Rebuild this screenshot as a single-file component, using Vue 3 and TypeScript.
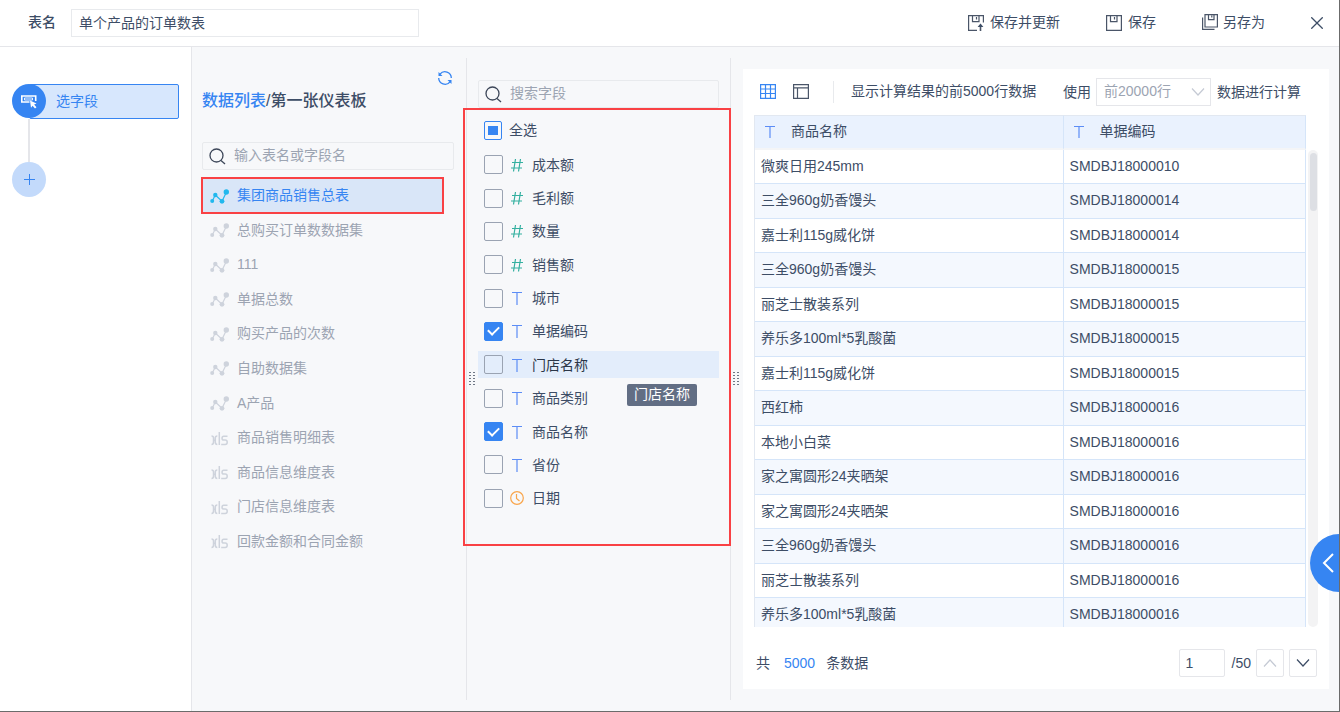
<script setup lang="ts">
import { ref } from 'vue'

interface SourceTable {
  name: string
  kind: 'set' | 'xls'
}
interface Field {
  name: string
  kind: 'number' | 'text' | 'date'
  checked: boolean
}

const tableName = ref('单个产品的订单数表')
const tableQuery = ref('')
const fieldQuery = ref('')
const limit = ref('前20000行')
const page = ref('1')
const activeTable = ref('集团商品销售总表')
const hovered = '门店名称'

const tables: SourceTable[] = [
  { name: '集团商品销售总表', kind: 'set' },
  { name: '总购买订单数数据集', kind: 'set' },
  { name: '111', kind: 'set' },
  { name: '单据总数', kind: 'set' },
  { name: '购买产品的次数', kind: 'set' },
  { name: '自助数据集', kind: 'set' },
  { name: 'A产品', kind: 'set' },
  { name: '商品销售明细表', kind: 'xls' },
  { name: '商品信息维度表', kind: 'xls' },
  { name: '门店信息维度表', kind: 'xls' },
  { name: '回款金额和合同金额', kind: 'xls' },
]

const fields = ref<Field[]>([
  { name: '成本额', kind: 'number', checked: false },
  { name: '毛利额', kind: 'number', checked: false },
  { name: '数量', kind: 'number', checked: false },
  { name: '销售额', kind: 'number', checked: false },
  { name: '城市', kind: 'text', checked: false },
  { name: '单据编码', kind: 'text', checked: true },
  { name: '门店名称', kind: 'text', checked: false },
  { name: '商品类别', kind: 'text', checked: false },
  { name: '商品名称', kind: 'text', checked: true },
  { name: '省份', kind: 'text', checked: false },
  { name: '日期', kind: 'date', checked: false },
])

const rows: [string, string][] = [
  ['微爽日用245mm', 'SMDBJ18000010'],
  ['三全960g奶香馒头', 'SMDBJ18000014'],
  ['嘉士利115g威化饼', 'SMDBJ18000014'],
  ['三全960g奶香馒头', 'SMDBJ18000015'],
  ['丽芝士散装系列', 'SMDBJ18000015'],
  ['养乐多100ml*5乳酸菌', 'SMDBJ18000015'],
  ['嘉士利115g威化饼', 'SMDBJ18000015'],
  ['西红柿', 'SMDBJ18000016'],
  ['本地小白菜', 'SMDBJ18000016'],
  ['家之寓圆形24夹晒架', 'SMDBJ18000016'],
  ['家之寓圆形24夹晒架', 'SMDBJ18000016'],
  ['三全960g奶香馒头', 'SMDBJ18000016'],
  ['丽芝士散装系列', 'SMDBJ18000016'],
  ['养乐多100ml*5乳酸菌', 'SMDBJ18000016'],
]
</script>

<template>
  <div class="page">
    <header class="top">
      <label class="top-label" for="table-name">表名</label>
      <input id="table-name" v-model="tableName" class="name-input" type="text" />
      <div class="actions">
        <button class="action" type="button">
          <svg width="16" height="16" viewBox="0 0 16 16" fill="none" stroke="#4a5568" stroke-width="1.200">
            <path d="M9 15.400H.6V.6h14.800v7M4.500 .6v6h6.500v-6M8.500 2v2.500" />
            <path d="M12.500 16v-5" stroke-width="1.600" />
            <path d="M9.600 12l2.900-3.600 2.900 3.600z" fill="#3d4d66" stroke="none" />
          </svg>
          <span>保存并更新</span>
        </button>
        <button class="action" type="button">
          <svg width="16" height="16" viewBox="0 0 16 16" fill="none" stroke="#4a5568" stroke-width="1.200">
            <path d="M.6.6h14.800v14.800H.6zM4.500 .6v6h6.500v-6M8.500 2v2.500" />
          </svg>
          <span>保存</span>
        </button>
        <button class="action tight" type="button">
          <svg class="raised" width="16" height="16" viewBox="0 0 16 16" fill="none" stroke="#4a5568" stroke-width="1.200">
            <path d="M3 .6h12.400v12.400H3zM6.500 .6v5h5.500v-5M9.800 1.500v2M.6 3.500v11.900H12.500" />
          </svg>
          <span>另存为</span>
        </button>
        <button class="action" type="button" aria-label="关闭">
          <svg width="12" height="12" viewBox="0 0 12 12" fill="none" stroke="#3d4d66" stroke-width="1.300">
            <path d="M.3.3l11.400 11.400M11.700 .3L.3 11.700" />
          </svg>
        </button>
      </div>
    </header>

    <main class="main">
      <aside class="steps">
        <button class="step" type="button">
          <span class="step-dot">
            <svg width="18" height="18" viewBox="0 0 18 18">
              <path d="M15.700 9V4H1.800v6H9.500" fill="none" stroke="#fff" stroke-width="1.600" />
              <path d="M4.500 6h8v2h-8z" fill="none" stroke="#fff" stroke-width=".9" />
              <path d="M10 8.500l6.500 3-2.400 1 2.400 2.700-1.500 1.400-2.400-2.800-1.600 2z" fill="#fff" />
            </svg>
          </span>
          <span class="step-name">选字段</span>
        </button>
        <span class="step-line"></span>
        <button class="add" type="button" aria-label="添加步骤">
          <svg width="12" height="12" viewBox="0 0 12 12" stroke="#3685f2">
            <path d="M6.500 0v11M1 5.500h11" />
          </svg>
        </button>
      </aside>

      <section class="sources">
        <div class="refresh-row">
          <button class="refresh" type="button" aria-label="刷新">
            <svg width="16" height="16" viewBox="0 0 16 16" fill="none" stroke="#3685f2" stroke-width="1.300">
              <path d="M3 4.200A6.300 6.300 0 0 1 14.300 8M13 11.800A6.300 6.300 0 0 1 1.700 8" />
              <path d="M1.500 2v4h4zM14.500 14v-4h-4z" fill="#3685f2" stroke="none" />
            </svg>
          </button>
        </div>
        <h1 class="title"><a href="#">数据列表</a>/第一张仪表板</h1>
        <div class="search">
          <svg width="17" height="17" viewBox="0 0 17 17" fill="none" stroke="#3d4759" stroke-width="1.300">
            <circle cx="7.500" cy="7.500" r="6.500" />
            <path d="M12 12.500l4 3.500" />
          </svg>
          <input v-model="tableQuery" type="text" placeholder="输入表名或字段名" aria-label="输入表名或字段名" />
        </div>
        <ul class="source-list">
          <li v-for="t in tables" :key="t.name">
            <button
              type="button"
              class="source"
              :class="{ active: t.name === activeTable }"
              @click="activeTable = t.name"
            >
              <svg v-if="t.kind === 'set'" width="19" height="15" viewBox="0 0 19 15">
                <path d="M2.300 12L5.300 6 12 12.300 16.500 3" fill="none" stroke="currentColor" stroke-width="1.200" />
                <g fill="currentColor">
                  <circle cx="2.200" cy="12" r="2" />
                  <circle cx="5.300" cy="6" r="2.200" />
                  <circle cx="12" cy="12.300" r="2.400" />
                  <circle cx="16.300" cy="3" r="2.700" />
                </g>
              </svg>
              <svg v-else width="19" height="15" viewBox="0 0 19 15" fill="none" stroke="currentColor" stroke-width="1.500">
                <path d="M1.500 5c1.700 0 2 .6 2 2v4c0 1.700-.5 2.500-2 2.500M7.300 5c-1.700 0-2 .6-2 2v4c0 1.700.5 2.500 2 2.500M3.500 9.200h2M9.300 1v13M17.500 5.300h-3.800c-2.200 0-2.200 3.800 0 3.800h1.500c2.700 0 2.700 4.300 0 4.300h-4" />
              </svg>
              <span>{{ t.name }}</span>
            </button>
          </li>
        </ul>
        <span class="grip"><i v-for="n in 10" :key="n"></i></span>
      </section>

      <section class="fields">
        <div class="search">
          <svg width="17" height="17" viewBox="0 0 17 17" fill="none" stroke="#3d4759" stroke-width="1.300">
            <circle cx="7.500" cy="7.500" r="6.500" />
            <path d="M12 12.500l4 3.500" />
          </svg>
          <input v-model="fieldQuery" type="text" placeholder="搜索字段" aria-label="搜索字段" />
        </div>
        <label class="all"><input type="checkbox" class="box partial" :indeterminate="true" />全选</label>
        <ul class="field-list">
          <li v-for="f in fields" :key="f.name">
            <label class="field" :class="{ hover: f.name === hovered }">
              <input v-model="f.checked" type="checkbox" class="box" />
              <svg v-if="f.kind === 'number'" width="14" height="14" viewBox="0 0 14 14" fill="none" stroke="#34b0a0" stroke-width="1.200">
                <path d="M5.500 1L3.500 13.500M10.500 1L8.500 13.500M2 4.500h11M1 10h11" />
              </svg>
              <svg v-else-if="f.kind === 'text'" width="14" height="14" viewBox="0 0 14 14" fill="none" stroke="#5c8df6" stroke-width="1.200">
                <path d="M2 1.500h10M7 1.500V14" />
              </svg>
              <svg v-else width="14" height="14" viewBox="0 0 14 14" fill="none" stroke="#f9a54b" stroke-width="1.200">
                <circle cx="7" cy="7" r="6.300" />
                <path d="M6.500 3v4.500l3 2.500" />
              </svg>
              <span>{{ f.name }}</span>
              <span v-if="f.name === hovered" class="tip" role="tooltip">{{ f.name }}</span>
            </label>
          </li>
        </ul>
        <span class="frame"></span>
        <span class="grip"><i v-for="n in 10" :key="n"></i></span>
      </section>

      <section class="preview">
        <div class="toolbar">
          <button class="icon-btn" type="button" aria-label="明细视图">
            <svg width="16" height="16" viewBox="0 0 16 16" fill="none" stroke="#3685f2" stroke-width="1.200">
              <path d="M.6.6h14.800v13.800H.6zM5.500 .6v13.800M10.500 .6v13.800M.6 5h14.800M.6 9.500h14.800" />
            </svg>
          </button>
          <button class="icon-btn" type="button" aria-label="结构视图">
            <svg width="16" height="16" viewBox="0 0 16 16" fill="none" stroke="#4a5568" stroke-width="1.200">
              <path d="M.6.6h14.800v13.800H.6zM.6 3.800h14.800M4.500 3.800v10.600" />
            </svg>
          </button>
          <span class="rule"></span>
          <span class="summary">显示计算结果的前5000行数据</span>
          <label for="limit">使用</label>
          <span class="select">
            <select id="limit" v-model="limit">
              <option>前20000行</option>
            </select>
            <svg width="14" height="8" viewBox="0 0 14 8" fill="none" stroke="#c5cad4" stroke-width="1.200">
              <path d="M1 .5l6 6.500 6-6.500" />
            </svg>
          </span>
          <span>数据进行计算</span>
        </div>

        <div class="grid">
          <div class="table-clip">
            <table>
              <thead>
                <tr>
                  <th v-for="h in ['商品名称', '单据编码']" :key="h">
                    <span class="th">
                      <svg width="14" height="14" viewBox="0 0 14 14" fill="none" stroke="#5c8df6" stroke-width="1.200">
                        <path d="M2 2.500h10M7 2.500V14" />
                      </svg>
                      {{ h }}
                    </span>
                  </th>
                </tr>
              </thead>
              <tbody>
                <tr v-for="(r, i) in rows" :key="i">
                  <td>{{ r[0] }}</td>
                  <td>{{ r[1] }}</td>
                </tr>
              </tbody>
            </table>
          </div>
          <div class="track"><span class="thumb"></span></div>
        </div>

        <footer class="foot">
          <span>共</span><b>5000</b><span>条数据</span>
          <input v-model="page" class="page-input" type="text" aria-label="页码" />
          <span class="pages">/50</span>
          <button class="pager" type="button" aria-label="上一页" disabled>
            <svg width="14" height="8" viewBox="0 0 14 8" fill="none" stroke="#c5cad4" stroke-width="1.200">
              <path d="M1 7.500L7 1l6 6.500" />
            </svg>
          </button>
          <button class="pager" type="button" aria-label="下一页">
            <svg width="14" height="8" viewBox="0 0 14 8" fill="none" stroke="#3d4d66" stroke-width="1.200">
              <path d="M1 .5L7 7l6-6.500" />
            </svg>
          </button>
        </footer>
      </section>
    </main>

    <button class="drawer" type="button" aria-label="展开">
      <svg width="12" height="20" viewBox="0 0 12 20" fill="none" stroke="#fff" stroke-width="2">
        <path d="M11 1L2 10l9 9" />
      </svg>
    </button>
  </div>
</template>

<style>
body {
  margin: 0;
}
</style>

<style scoped>
.page {
  position: relative;
  box-sizing: border-box;
  display: flex;
  flex-direction: column;
  min-height: 100vh;
  border-right: 1px solid #6b6b6b;
  border-bottom: 1px solid #6b6b6b;
  background: #f7f8fa;
  color: #3d4d66;
  font: 14px/20px 'Liberation Sans', 'Noto Sans CJK SC', sans-serif;
  overflow: hidden;
}
.page *,
.page *::before {
  box-sizing: border-box;
}
button,
input,
select {
  font: inherit;
  color: inherit;
}
button {
  padding: 0;
  border: 0;
  background: none;
  cursor: pointer;
}
svg {
  display: block;
  flex: none;
}
ul {
  margin: 0;
  padding: 0;
  list-style: none;
}
.top {
  display: flex;
  align-items: center;
  height: 47px;
  padding: 0 16px 0 28px;
  border-bottom: 1px solid #e5e6ea;
  background: #fff;
}
.top-label {
  width: 43px;
  padding-bottom: 2px;
  font-weight: 500;
}
.name-input {
  width: 348px;
  height: 28px;
  padding: 0 7px 2px;
  border: 1px solid #e8eaed;
  outline: 0;
  background: #fff;
}
.actions {
  display: flex;
  align-items: center;
  gap: 46px;
  margin-left: auto;
}
.action {
  display: flex;
  align-items: center;
  gap: 6px;
}
.action span {
  padding-bottom: 2px;
}
.raised {
  margin-bottom: 2px;
}
.tight {
  gap: 5px;
}
.main {
  display: flex;
  flex: 1;
}
.steps {
  display: flex;
  flex: none;
  flex-direction: column;
  width: 192px;
  padding: 37px 12px 0;
  border-right: 1px solid #e5e6ea;
  background: #fff;
}
.step {
  display: flex;
  color: #3685f2;
  text-align: left;
}
.step-dot {
  z-index: 1;
  display: grid;
  flex: none;
  place-items: center;
  width: 34px;
  height: 34px;
  border-radius: 50%;
  background: #3685f2;
}
.step-name {
  flex: 1;
  height: 35px;
  margin-left: -17px;
  padding-left: 26px;
  border: 1px solid #3685f2;
  border-radius: 2px;
  background: #d7e7fd;
  line-height: 33px;
}
.step-line {
  width: 2px;
  height: 43px;
  margin-left: 16px;
  background: #e5e6ea;
}
.add {
  display: grid;
  place-items: center;
  width: 34px;
  height: 35px;
  border-radius: 50%;
  background: #c3dafb;
}
.sources,
.fields {
  position: relative;
  flex: none;
  margin: 11px 0;
  border-right: 1px solid #e5e6ea;
}
.sources {
  width: 275px;
  padding: 12px 12px 0 10px;
}
.refresh-row {
  display: flex;
  justify-content: flex-end;
  padding-right: 1px;
}
.title {
  margin: 3px 0 29px;
  font-size: 16px;
  font-weight: 500;
  line-height: 24px;
}
.title a {
  color: #3685f2;
  text-decoration: none;
}
.search {
  display: flex;
  align-items: center;
  gap: 8px;
  height: 28px;
  padding: 0 6px;
  border: 1px solid #e8eaed;
  border-radius: 2px;
}
.search input {
  flex: 1;
  min-width: 0;
  padding: 0 0 2px;
  border: 0;
  outline: 0;
  background: none;
}
.search input::placeholder {
  color: #9ca4b2;
  opacity: 1;
}
.source-list {
  display: grid;
  grid-auto-rows: 1fr;
  height: 380px;
  margin: 8px 11px 0 0;
}
.source-list li {
  display: flex;
}
.source {
  display: flex;
  flex: 1;
  align-items: center;
  gap: 8px;
  padding: 0 8px;
  color: #9ca4b2;
}
.source svg {
  margin-top: 2px;
  color: #ced3dc;
}
.source.active {
  outline: 2px solid #f94144;
  outline-offset: -1px;
  background: #d9e6f8;
  color: #3685f2;
}
.source.active svg {
  color: #22b8ee;
}
.grip {
  position: absolute;
  top: 50%;
  right: -9px;
  display: grid;
  grid-template-columns: 2px 2px;
  gap: 2px;
  margin-top: -7px;
}
.grip i {
  width: 2px;
  height: 1px;
  background: #6f7785;
}
.fields {
  width: 264px;
  padding: 22px 11px 0;
}
.all {
  display: flex;
  align-items: center;
  gap: 7px;
  height: 20px;
  margin: 12px 0 8px 6px;
}
.box {
  display: grid;
  flex: none;
  place-items: center;
  width: 19px;
  height: 19px;
  margin: 0;
  border: 1px solid #9aa3b2;
  border-radius: 2px;
  appearance: none;
}
.box:checked {
  border-color: #3685f2;
  background: #3685f2;
}
.box:checked::before {
  width: 7px;
  height: 11px;
  margin-top: -3px;
  border: solid #fff;
  border-width: 0 2px 2px 0;
  content: '';
  transform: rotate(45deg);
}
.partial {
  width: 18px;
  border-color: #3685f2;
}
.partial::before {
  width: 10px;
  height: 9px;
  background: #3685f2;
  content: '';
}
.field-list {
  display: grid;
  grid-auto-rows: 1fr;
  height: 367px;
}
.field-list li {
  display: grid;
  align-items: center;
}
.field {
  position: relative;
  display: flex;
  align-items: center;
  gap: 8px;
  height: 27px;
  padding-left: 6px;
}
.field.hover {
  background: #e3edfb;
  color: #2b3648;
}
.box + svg {
  margin-left: -1px;
}
.tip {
  position: absolute;
  top: 33px;
  left: 149px;
  z-index: 2;
  padding: 0 7px 2px;
  border-radius: 2px;
  background: #626e84;
  color: #fff;
  line-height: 20px;
}
.frame {
  position: absolute;
  top: 50px;
  right: -1px;
  left: -4px;
  height: 438px;
  border: 2px solid #f94144;
  pointer-events: none;
}
.preview {
  display: flex;
  flex: 1;
  flex-direction: column;
  min-width: 0;
  margin: 22px 10px 22px 12px;
  padding: 0 11px;
  background: #fff;
}
.toolbar {
  display: flex;
  align-items: center;
  height: 46px;
  padding-left: 6px;
  white-space: nowrap;
}
.icon-btn {
  margin-right: 17px;
}
.rule {
  width: 1px;
  height: 22px;
  margin: 0 17px 0 7px;
  background: #e8eaed;
}
.summary {
  margin-right: auto;
  padding-bottom: 2px;
}
.select {
  position: relative;
  margin: 0 6px 0 5px;
}
.toolbar > :last-child {
  margin-right: 17px;
}
.select select {
  display: block;
  width: 115px;
  height: 28px;
  padding: 0 7px 2px;
  border: 1px solid #e5e6ea;
  outline: 0;
  background: #fff;
  color: #9ca4b2;
  appearance: none;
}
.select svg {
  position: absolute;
  top: 10px;
  right: 6px;
  pointer-events: none;
}
.grid {
  display: flex;
  gap: 2px;
  height: 512px;
}
.table-clip {
  flex: 1;
  overflow: hidden;
}
table {
  width: 100%;
  border-spacing: 0;
  border-left: 1px solid #e2e8f1;
  table-layout: fixed;
}
th,
td {
  padding: 0 6px 2px;
  border-right: 1px solid #d5e5f9;
  border-bottom: 1px solid #d5e5f9;
  font-weight: 400;
  text-align: left;
}
th {
  height: 35px;
  border-top: 1px solid #e2e8f1;
  border-bottom: 2px solid #f4f5f7;
  background: #eaf2fe;
}
th:first-child {
  width: 56%;
}
.th {
  display: flex;
  align-items: center;
  gap: 14px;
  padding-left: 2px;
}
td {
  height: 34px;
}
tr:nth-child(even) td {
  height: 35px;
  background: #f4f8fe;
}
.track {
  width: 10px;
  margin-top: 35px;
  padding: 3px 1px 0 2px;
  border-radius: 5px;
  background: #f3f3f4;
}
.thumb {
  display: block;
  height: 58px;
  border-radius: 4px;
  background: #dddfe4;
}
.foot {
  display: flex;
  align-items: center;
  margin-top: 22px;
  padding: 0 1px 0 2px;
}
.foot b {
  margin: 0 11px 0 14px;
  color: #3685f2;
  font-weight: 400;
}
.page-input {
  width: 46px;
  height: 28px;
  margin: 0 7px 0 auto;
  padding: 0 6px;
  border: 1px solid #e5e6ea;
  border-radius: 2px;
  outline: 0;
}
.pager {
  display: grid;
  place-items: center;
  width: 28px;
  height: 28px;
  margin-left: 5px;
  border: 1px solid #e5e6ea;
  border-radius: 2px;
}
.drawer {
  position: absolute;
  right: 0;
  bottom: 119px;
  display: grid;
  place-items: center;
  width: 29px;
  height: 58px;
  padding-left: 6px;
  border-radius: 29px 0 0 29px;
  background: #3685f2;
}
</style>
